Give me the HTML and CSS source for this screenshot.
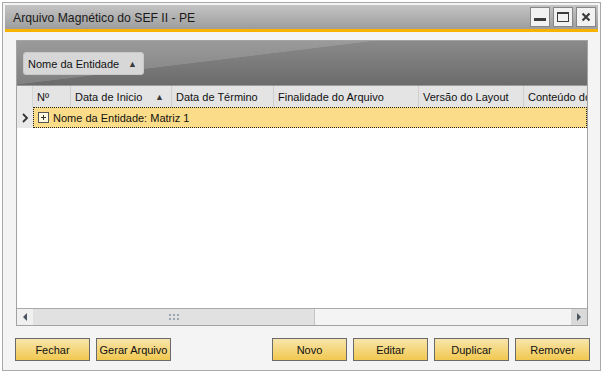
FILE: index.html
```html
<!DOCTYPE html>
<html lang="pt">
<head>
<meta charset="utf-8">
<title>Arquivo Magnético do SEF II - PE</title>
<link rel="stylesheet" href="styles.css">
</head>
<body>
<div class="window">
  <div class="titlebar">
    <span class="title">Arquivo Magnético do SEF II - PE</span>
    <div class="wbtns">
      <span class="wbtn"><svg width="14" height="14" viewBox="0 0 14 14"><rect x="1" y="8" width="12" height="3" fill="#3c3c3c"/></svg></span>
      <span class="wbtn"><svg width="14" height="14" viewBox="0 0 14 14"><rect x="1.5" y="2.5" width="11" height="9" fill="none" stroke="#3c3c3c" stroke-width="1"/><rect x="1" y="2" width="12" height="2" fill="#3c3c3c"/></svg></span>
      <span class="wbtn"><svg width="14" height="14" viewBox="0 0 14 14"><path d="M3.5 3.5 L10.5 10.5 M10.5 3.5 L3.5 10.5" stroke="#3c3c3c" stroke-width="2.2"/></svg></span>
    </div>
  </div>
  <div class="accent"></div>
  <div class="body">
    <div class="grid">
      <div class="groupby">
        <div class="chip"><span>Nome da Entidade</span><span class="tri">▲</span></div>
      </div>
      <div class="header">
        <div class="hcell ind"></div>
        <div class="hcell c1">Nº</div>
        <div class="hcell c2">Data de Inicio <span class="tri">▲</span></div>
        <div class="hcell c3">Data de Término</div>
        <div class="hcell c4">Finalidade do Arquivo</div>
        <div class="hcell c5">Versão do Layout</div>
        <div class="hcell c6">Conteúdo do</div>
      </div>
      <div class="grow">
        <div class="ind"><svg width="8" height="10" viewBox="0 0 8 10"><path d="M2 1 L6 5 L2 9" fill="none" stroke="#333" stroke-width="1.8"/></svg></div>
        <div class="gcell"><span class="plus"><svg width="11" height="11" viewBox="0 0 11 11"><rect x="0.5" y="0.5" width="10" height="10" fill="#fff8e0" stroke="#555"/><path d="M3 5.5 H8 M5.5 3 V8" stroke="#333"/></svg></span>Nome da Entidade: Matriz 1</div>
      </div>
      <div class="empty"></div>
      <div class="hscroll">
        <div class="sbtn"><svg width="8" height="10" viewBox="0 0 8 10"><path d="M6 1 L2 5 L6 9 Z" fill="#4a5560"/></svg></div>
        <div class="thumb"><svg width="10" height="6" viewBox="0 0 10 6"><g fill="#9aa6b4"><rect x="0" y="0" width="2" height="2"/><rect x="4" y="0" width="2" height="2"/><rect x="8" y="0" width="2" height="2"/><rect x="0" y="4" width="2" height="2"/><rect x="4" y="4" width="2" height="2"/><rect x="8" y="4" width="2" height="2"/></g></svg></div>
        <div class="track"></div>
        <div class="sbtn dark"><svg width="8" height="10" viewBox="0 0 8 10"><path d="M2 1 L6 5 L2 9 Z" fill="#4a5560"/></svg></div>
      </div>
    </div>
    <div class="buttons">
      <div class="bgroup">
        <button class="btn">Fechar</button>
        <button class="btn">Gerar Arquivo</button>
      </div>
      <div class="bgroup">
        <button class="btn">Novo</button>
        <button class="btn">Editar</button>
        <button class="btn">Duplicar</button>
        <button class="btn">Remover</button>
      </div>
    </div>
  </div>
</div>
</body>
</html>
```
FILE: styles.css
```css
* { box-sizing: border-box; }
html, body { margin: 0; padding: 0; background: #ffffff; }
body {
  padding: 2px;
  font-family: "Liberation Sans", Arial, sans-serif;
  font-size: 11px;
  color: #111;
}
.window {
  width: 599px;
  height: 369px;
  border: 1px solid #a9a9a9;
  padding: 2px;
  background: #f4f4f4;
  display: flex;
  flex-direction: column;
}
.titlebar {
  height: 24px;
  background: linear-gradient(#c4c4c4, #9d9d9d);
  display: flex;
  align-items: center;
  justify-content: space-between;
  padding: 0 2px 0 8px;
}
.title {
  font-size: 12.2px;
  color: #1a1a1a;
  padding-top: 1px;
}
.wbtns { display: flex; gap: 3px; }
.wbtn {
  width: 20px;
  height: 20px;
  border: 1px solid #868686;
  background: #f2f2f2;
  display: flex;
  align-items: center;
  justify-content: center;
}
.accent { height: 3px; background: #f8b300; }
.body {
  flex: 1;
  padding: 8px 8px 7px 11px;
  display: flex;
  flex-direction: column;
}
.grid {
  width: 572px;
  height: 286px;
  border: 1px solid #a3a3a3;
  background: #ffffff;
  display: flex;
  flex-direction: column;
}
.groupby {
  height: 44px;
  background:
    linear-gradient(173deg, rgba(255,255,255,0.14) 0 38%, rgba(255,255,255,0) 38.5%),
    linear-gradient(#8a8a8a, #6b6b6b);
  padding: 11px 0 0 6px;
}
.chip {
  width: 121px;
  height: 23px;
  background: #d7d7d7;
  border: 1px solid #c9c9c9;
  border-radius: 3px;
  display: flex;
  align-items: center;
  justify-content: space-between;
  padding: 0 6px 0 4px;
  color: #111;
}
.tri { font-size: 9px; color: #3a3a3a; }
.header {
  height: 22px;
  display: flex;
  background: #e4e4e4;
  border-top: 1px solid #9a9a9a;
}
.hcell {
  display: flex;
  align-items: center;
  padding-left: 4px;
  border-right: 1px solid #cfcfcf;
  white-space: nowrap;
  overflow: hidden;
  color: #111;
}
.hcell.ind { width: 16px; padding: 0; background: #e9e9e9; border-right: 1px solid #d6d6d6; }
.c1 { width: 38px; }
.c2 { width: 101px; justify-content: space-between; padding-right: 7px; }
.c3 { width: 102px; }
.c4 { width: 145px; }
.c5 { width: 105px; }
.c6 { flex: 1; border-right: 0; }
.grow {
  height: 21px;
  display: flex;
}
.grow .ind {
  width: 16px;
  background: #e9e9e9;
  display: flex;
  align-items: center;
  justify-content: center;
}
.gcell {
  flex: 1;
  background: #fbdc88;
  border: 1px dotted #222;
  display: flex;
  align-items: center;
  padding-left: 4px;
  color: #111;
}
.plus { display: inline-flex; margin-right: 4px; }
.empty { flex: 1; background: #fff; }
.hscroll {
  height: 17px;
  display: flex;
  border-top: 1px solid #a9a9a9;
  background: #f4f4f4;
}
.sbtn {
  width: 16px;
  display: flex;
  align-items: center;
  justify-content: center;
  background: #f0f0f0;
}
.sbtn.dark { background: #d9d9d9; }
.thumb {
  width: 282px;
  background: #e1e1e1;
  border-right: 1px solid #c4c4c4;
  display: flex;
  align-items: center;
  justify-content: center;
}
.track { flex: 1; background: #f4f4f4; }
.buttons {
  margin-top: 12px;
  display: flex;
  justify-content: space-between;
  margin-left: -1px;
}
.bgroup { display: flex; gap: 6px; }
.btn {
  width: 75px;
  height: 23px;
  border: 1px solid #6a6a6a;
  background: linear-gradient(#f8e5ac, #f1c84f);
  font-family: "Liberation Sans", Arial, sans-serif;
  font-size: 11px;
  color: #111;
  padding: 0;
  margin: 0;
}
```
